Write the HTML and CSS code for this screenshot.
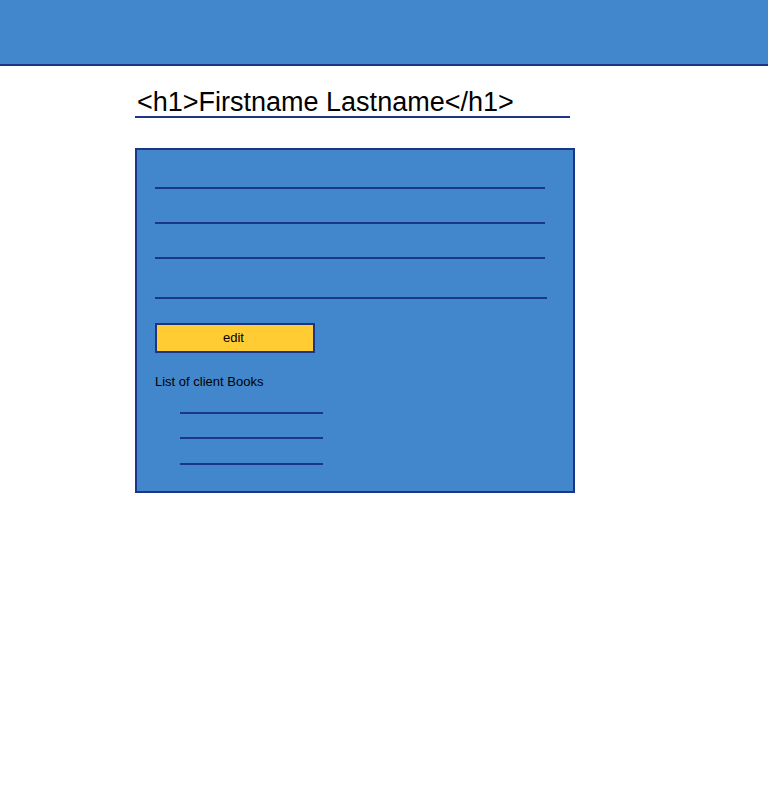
FILE: index.html
```html
<!DOCTYPE html>
<html>
<head>
<meta charset="utf-8">
<link rel="stylesheet" href="styles.css">
</head>
<body>
<header class="topbar"></header>
<main class="page">
  <h1 class="title">&lt;h1&gt;Firstname Lastname&lt;/h1&gt;</h1>
  <section class="card">
    <div class="field f1"></div>
    <div class="field f2"></div>
    <div class="field f3"></div>
    <div class="field f4"></div>
    <button class="edit-btn">edit</button>
    <p class="list-label">List of client Books</p>
    <ul class="books">
      <li class="book b1"></li>
      <li class="book b2"></li>
      <li class="book b3"></li>
    </ul>
  </section>
</main>
</body>
</html>
```
FILE: styles.css
```css
* { box-sizing: border-box; }
body {
  margin: 0;
  font-family: "Liberation Sans", Arial, sans-serif;
  background: #fff;
  color: #000;
}
.topbar {
  height: 66px;
  background: #4287cc;
  border-bottom: 2px solid #1b3587;
}
.page {
  padding-left: 135px;
}
.title {
  width: 435px;
  margin: 23px 0 0;
  padding-left: 2px;
  font-size: 27px;
  font-weight: normal;
  line-height: 27px;
  border-bottom: 2px solid #1b3587;
}
.card {
  width: 440px;
  margin-top: 30px;
  background: #4287cc;
  border: 2px solid #1b3587;
  padding: 0 18px 26px;
}
.field {
  width: 390px;
  border-bottom: 2px solid #1b3587;
}
.f1 { height: 39px; }
.f2 { height: 35px; }
.f3 { height: 35px; }
.f4 { height: 40px; width: 392px; }
.edit-btn {
  display: block;
  margin-top: 24px;
  width: 160px;
  height: 30px;
  background: #ffcc33;
  border: 2px solid #1b3587;
  font-family: "Liberation Sans", Arial, sans-serif;
  font-size: 13px;
  color: #000;
  padding: 0 3px 2px 0;
}
.list-label {
  margin: 21px 0 0;
  font-size: 13px;
  line-height: 16px;
}
.books {
  list-style: none;
  margin: 0;
  padding: 0 0 0 25px;
}
.book {
  width: 143px;
  border-bottom: 2px solid #1b3587;
}
.b1 { height: 24px; }
.b2 { height: 25px; }
.b3 { height: 26px; }
```
